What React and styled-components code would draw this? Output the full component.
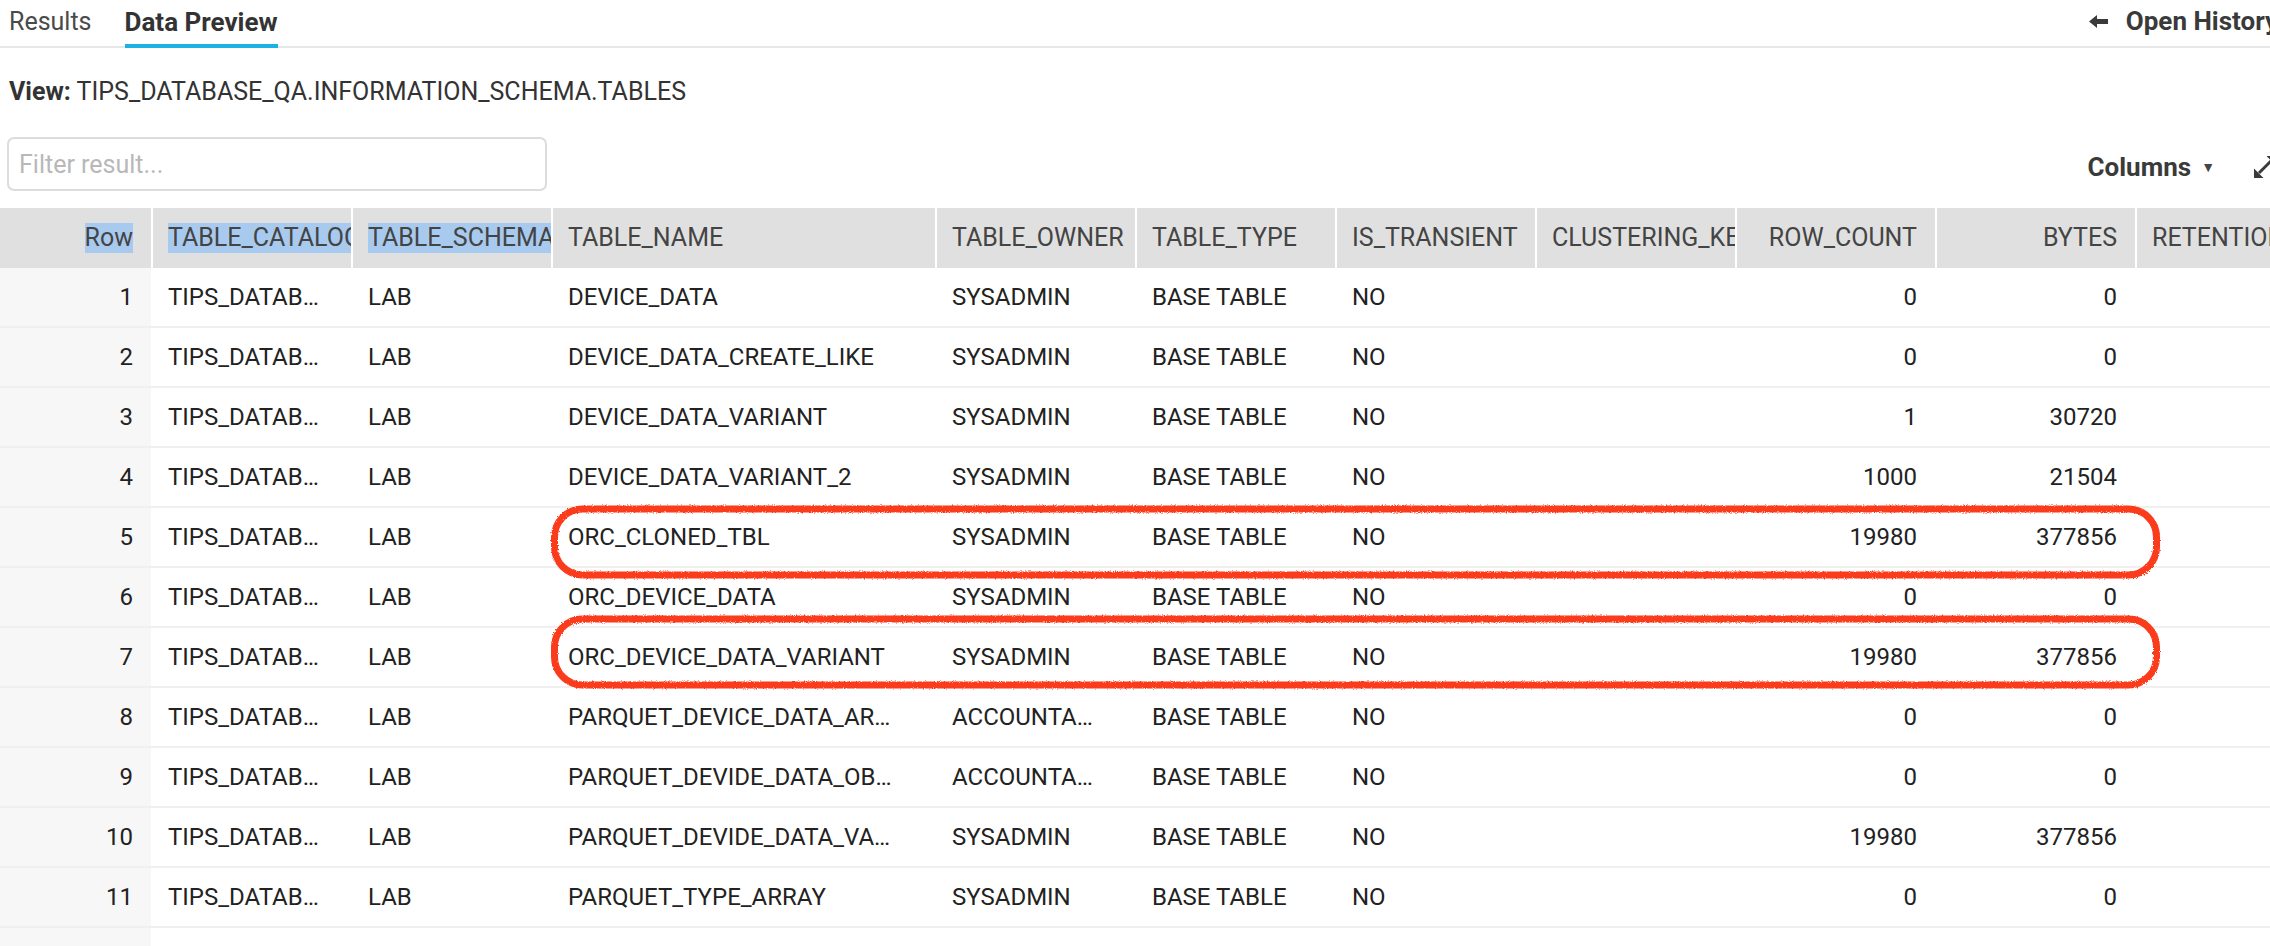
import React from "react";
import styled, { createGlobalStyle } from "styled-components";

const GlobalStyle = createGlobalStyle`
  html, body {
    margin: 0;
    padding: 0;
    background: #ffffff;
    overflow: hidden;
  }
  body {
    font-family: Roboto, "Liberation Sans", sans-serif;
    -webkit-font-smoothing: antialiased;
  }
`;

const columns = [
  { key: "row", label: "Row", width: 151, align: "right", selected: true },
  { key: "catalog", label: "TABLE_CATALOG", width: 200, selected: true },
  { key: "schema", label: "TABLE_SCHEMA", width: 200, selected: true },
  { key: "name", label: "TABLE_NAME", width: 384 },
  { key: "owner", label: "TABLE_OWNER", width: 200 },
  { key: "type", label: "TABLE_TYPE", width: 200 },
  { key: "transient", label: "IS_TRANSIENT", width: 200 },
  { key: "clustering", label: "CLUSTERING_KEY", width: 200 },
  { key: "rowCount", label: "ROW_COUNT", width: 200, align: "right" },
  { key: "bytes", label: "BYTES", width: 200, align: "right" },
  { key: "retention", label: "RETENTION_TIME", width: 220 },
];

const tables = [
  ["DEVICE_DATA", "SYSADMIN", 0, 0],
  ["DEVICE_DATA_CREATE_LIKE", "SYSADMIN", 0, 0],
  ["DEVICE_DATA_VARIANT", "SYSADMIN", 1, 30720],
  ["DEVICE_DATA_VARIANT_2", "SYSADMIN", 1000, 21504],
  ["ORC_CLONED_TBL", "SYSADMIN", 19980, 377856],
  ["ORC_DEVICE_DATA", "SYSADMIN", 0, 0],
  ["ORC_DEVICE_DATA_VARIANT", "SYSADMIN", 19980, 377856],
  ["PARQUET_DEVICE_DATA_ARRAY", "ACCOUNTADMIN", 0, 0],
  ["PARQUET_DEVIDE_DATA_OBJECT", "ACCOUNTADMIN", 0, 0],
  ["PARQUET_DEVIDE_DATA_VARIANT", "SYSADMIN", 19980, 377856],
  ["PARQUET_TYPE_ARRAY", "SYSADMIN", 0, 0],
];

const rows = tables.map(([name, owner, rowCount, bytes], i) => ({
  row: i + 1,
  catalog: "TIPS_DATABASE_QA",
  schema: "LAB",
  name,
  owner,
  type: "BASE TABLE",
  transient: "NO",
  clustering: "",
  rowCount,
  bytes,
  retention: "",
}));

// hand-drawn circles round rows 5 and 7 (index, vertical nudge)
const marks = [
  { index: 4, nudge: 1 },
  { index: 6, nudge: -9 },
];

const Page = styled.div`
  width: 2288px;
  color: #222;
`;

const TabBar = styled.div`
  display: flex;
  align-items: flex-end;
  gap: 33px;
  height: 48px;
  box-sizing: border-box;
  padding-left: 9px;
  border-bottom: 2px solid #e7e7e7;
`;

const Tab = styled.div`
  font-size: ${(p) => (p.$active ? 26 : 25)}px;
  line-height: 28px;
  padding-bottom: 8px;
  margin-bottom: -2px;
  color: ${(p) => (p.$active ? "#333" : "#4a4a4a")};
  font-weight: ${(p) => (p.$active ? 700 : 400)};
  border-bottom: 4px solid ${(p) => (p.$active ? "#1db2e1" : "transparent")};
`;

const HistoryButton = styled.div`
  margin-left: auto;
  align-self: center;
  display: flex;
  align-items: center;
  gap: 18px;
  padding-right: 10px;
  font-size: 26px;
  font-weight: 700;
  color: #3a3a3a;
  white-space: nowrap;
  margin-top: -4px;
`;

const ViewLine = styled.div`
  margin-top: 30px;
  padding-left: 9px;
  font-size: 25px;
  line-height: 28px;
  color: #333;

  b {
    font-weight: 700;
  }
`;

const Toolbar = styled.div`
  display: flex;
  align-items: center;
  margin-top: 31px;
  padding-left: 7px;
  height: 54px;
`;

const FilterInput = styled.input`
  width: 540px;
  height: 54px;
  box-sizing: border-box;
  border: 2px solid #dcdcdc;
  border-radius: 7px;
  padding: 0 10px;
  font-family: inherit;
  font-size: 25px;
  color: #333;
  outline: none;

  &::placeholder {
    color: #b8b8b8;
  }
`;

const ColumnsButton = styled.div`
  margin-left: auto;
  display: flex;
  align-items: center;
  gap: 10px;
  font-size: 26px;
  font-weight: 700;
  color: #3a3a3a;
  margin-top: 6px;
`;

const Caret = styled.span`
  font-size: 14px;
  color: #444;
`;

const ExpandButton = styled.div`
  margin-left: 39px;
  margin-right: 12px;
  display: flex;
  margin-top: 6px;
`;

const TableWrap = styled.div`
  position: relative;
  margin-top: 17px;
`;

const HeaderRow = styled.div`
  display: flex;
  height: 60px;
  background: #e0e0e0;
`;

const HeadCell = styled.div`
  flex: 0 0 ${(p) => p.$width}px;
  box-sizing: border-box;
  display: flex;
  align-items: center;
  justify-content: ${(p) => (p.$align === "right" ? "flex-end" : "flex-start")};
  border-left: ${(p) => (p.$first ? "none" : "2px solid #ffffff")};
  padding-left: ${(p) => (p.$first ? 0 : 15)}px;
  padding-right: ${(p) => (p.$align === "right" ? 18 : 0)}px;
  overflow: hidden;
  white-space: nowrap;
  font-size: 25px;
  color: #444;
`;

const HeadLabel = styled.span`
  line-height: 30px;
  background: ${(p) => (p.$selected ? "#a8caef" : "transparent")};
`;

const BodyRow = styled.div`
  display: flex;
  height: 60px;
  box-sizing: border-box;
  border-bottom: 2px solid #f0f0f0;
`;

const Cell = styled.div`
  flex: 0 0 ${(p) => p.$width}px;
  box-sizing: border-box;
  padding: 0 ${(p) => (p.$align === "right" ? 18 : 32)}px 0 17px;
  line-height: 58px;
  font-size: 24px;
  color: #222;
  text-align: ${(p) => p.$align || "left"};
  white-space: nowrap;
  overflow: hidden;
  text-overflow: ellipsis;
  background: ${(p) => (p.$gutter ? "#f7f7f7" : "transparent")};
`;

const Marker = styled.svg`
  position: absolute;
  left: 0;
  top: 0;
  pointer-events: none;
  overflow: visible;
`;

const ArrowLeft = () => (
  <svg width="19" height="13" viewBox="0 0 19 13">
    <path d="M0 6.5 L8 0 V4 H19 V9 H8 V13 Z" fill="#3a3a3a" />
  </svg>
);

const ExpandIcon = () => (
  <svg width="22" height="22" viewBox="0 0 22 22">
    <path d="M22 0 H12.5 L22 9.5 Z M0 22 V12.5 L9.5 22 Z" fill="#3a3a3a" />
    <path d="M17 5 L5 17" stroke="#3a3a3a" strokeWidth="3" />
  </svg>
);

const format = (value) => (value === undefined ? "" : String(value));

export default function App() {
  const markY = (index) => 60 + index * 60;

  return (
    <Page>
      <GlobalStyle />
      <TabBar>
        <Tab>Results</Tab>
        <Tab $active>Data Preview</Tab>
        <HistoryButton>
          <ArrowLeft />
          Open History
        </HistoryButton>
      </TabBar>

      <ViewLine>
        <b>View:</b> TIPS_DATABASE_QA.INFORMATION_SCHEMA.TABLES
      </ViewLine>

      <Toolbar>
        <FilterInput placeholder="Filter result..." />
        <ColumnsButton>
          Columns <Caret>▼</Caret>
        </ColumnsButton>
        <ExpandButton>
          <ExpandIcon />
        </ExpandButton>
      </Toolbar>

      <TableWrap>
        <HeaderRow>
          {columns.map((c, i) => (
            <HeadCell key={c.key} $width={c.width} $align={c.align} $first={i === 0}>
              <HeadLabel $selected={c.selected}>{c.label}</HeadLabel>
            </HeadCell>
          ))}
        </HeaderRow>
        {rows.map((r) => (
          <BodyRow key={r.row}>
            {columns.map((c) => (
              <Cell key={c.key} $width={c.width} $align={c.align} $gutter={c.key === "row"}>
                {format(r[c.key])}
              </Cell>
            ))}
          </BodyRow>
        ))}
        <BodyRow>
          {columns.map((c) => (
            <Cell key={c.key} $width={c.width} $gutter={c.key === "row"} />
          ))}
        </BodyRow>

        <Marker width="2288" height="800">
          <defs>
            <filter id="rough" x="-5%" y="-20%" width="110%" height="140%">
              <feTurbulence type="fractalNoise" baseFrequency="0.9" numOctaves="2" seed="3" />
              <feDisplacementMap in="SourceGraphic" scale="3" />
            </filter>
          </defs>
          {marks.map((m) => (
            <rect
              key={m.index}
              x="554.5"
              y={markY(m.index) + m.nudge}
              width="1602"
              height="66"
              rx="28"
              fill="none"
              stroke="#fa3a1c"
              strokeWidth="7"
              filter="url(#rough)"
            />
          ))}
        </Marker>
      </TableWrap>
    </Page>
  );
}
